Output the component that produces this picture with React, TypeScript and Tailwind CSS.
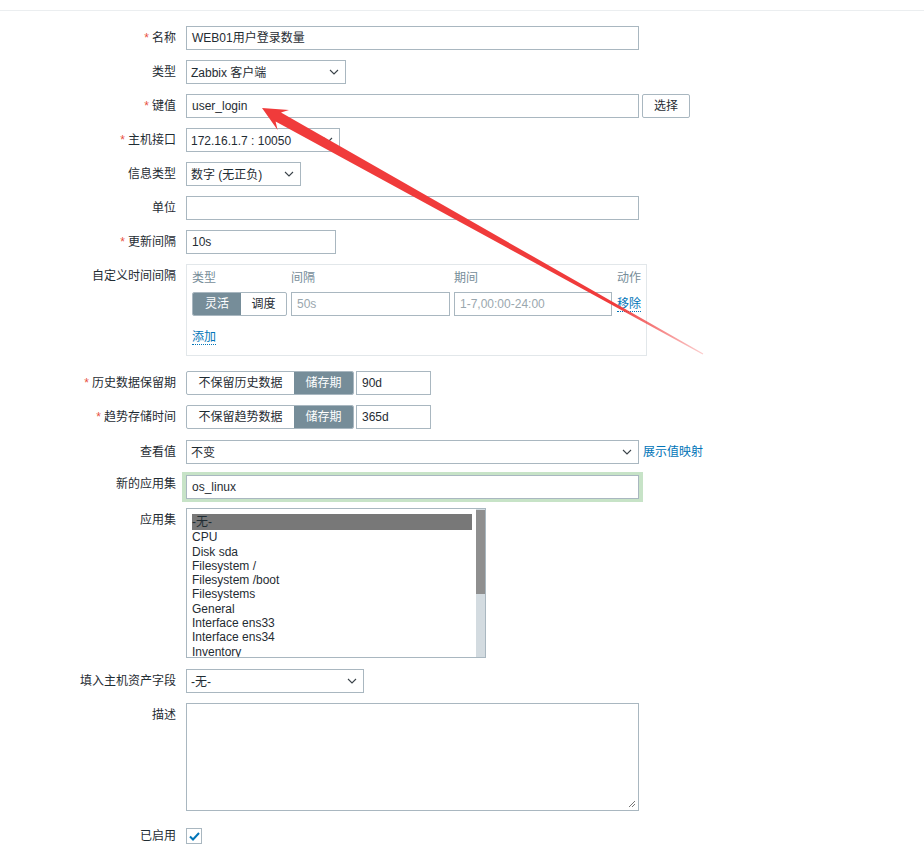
const FONT = "font-['Liberation_Sans','Noto_Sans_CJK_SC',sans-serif]"

const APPS = [
  "CPU",
  "Disk sda",
  "Filesystem /",
  "Filesystem /boot",
  "Filesystems",
  "General",
  "Interface ens33",
  "Interface ens34",
  "Inventory",
]

function Chevron() {
  return (
    <svg width="10" height="6" viewBox="0 0 10 6" className="shrink-0">
      <path d="M1 1 L5 5 L9 1" fill="none" stroke="#3a4349" strokeWidth="1.1" />
    </svg>
  )
}

function Row({
  label,
  required,
  className,
  children,
}: {
  label: string
  required?: boolean
  className?: string
  children: React.ReactNode
}) {
  return (
    <div className={"flex " + (className ?? "")}>
      <div className="w-[176px] shrink-0 text-right leading-[24px] whitespace-nowrap">
        {required && <span className="mr-[3px] text-[#e8513f]">*</span>}
        {label}
      </div>
      <div className="ml-[10px] flex items-start">{children}</div>
    </div>
  )
}

function TextBox({ w, value }: { w: string; value?: string }) {
  return (
    <div className={"h-[24px] border border-[#a9b7c0] bg-white px-[5px] leading-[23px] " + w}>
      {value}
    </div>
  )
}

function SelectBox({ w, value }: { w: string; value: string }) {
  return (
    <div
      className={
        "flex h-[24px] items-center justify-between border border-[#a9b7c0] bg-white pl-[4px] pr-[6px] " + w
      }
    >
      <span className="pt-[1px]">{value}</span>
      <Chevron />
    </div>
  )
}

function Arrow() {
  return (
    <svg
      className="pointer-events-none absolute left-0 top-0"
      width="924"
      height="845"
      viewBox="0 0 924 845"
    >
      <defs>
        <linearGradient id="arrowFade" gradientUnits="userSpaceOnUse" x1="262" y1="108" x2="703" y2="354">
          <stop offset="0" stopColor="#f03b3b" />
          <stop offset="0.8" stopColor="#f03b3b" />
          <stop offset="1" stopColor="#f03b3b" stopOpacity="0.25" />
        </linearGradient>
      </defs>
      <polygon
        points="262,108 289,110 281,112.6 703.3,353.6 702.7,354.4 275.6,121.4 277.6,130"
        fill="url(#arrowFade)"
      />
    </svg>
  )
}

export default function App() {
  return (
    <div className={"relative h-[845px] w-[924px] overflow-hidden bg-white text-[12px] text-[#1f2c33] " + FONT}>
      <div className="h-[11px] border-b border-[#ebeef0]" />

      <Row label="名称" required className="mt-[15px]">
        <TextBox w="w-[453px]" value="WEB01用户登录数量" />
      </Row>

      <Row label="类型" className="mt-[10px]">
        <SelectBox w="w-[160px]" value="Zabbix 客户端" />
      </Row>

      <Row label="键值" required className="mt-[10px]">
        <TextBox w="w-[453px]" value="user_login" />
        <div className="ml-[3px] h-[24px] w-[48px] rounded-[2px] border border-[#a9b7c0] bg-white text-center leading-[22px]">
          选择
        </div>
      </Row>

      <Row label="主机接口" required className="mt-[10px]">
        <SelectBox w="w-[154px]" value="172.16.1.7 : 10050" />
      </Row>

      <Row label="信息类型" className="mt-[10px]">
        <SelectBox w="w-[115px]" value="数字 (无正负)" />
      </Row>

      <Row label="单位" className="mt-[10px]">
        <TextBox w="w-[453px]" />
      </Row>

      <Row label="更新间隔" required className="mt-[10px]">
        <TextBox w="w-[150px]" value="10s" />
      </Row>

      <Row label="自定义时间间隔" className="mt-[10px]">
        <div className="h-[92px] w-[461px] border border-[#e2e7ea] px-[5px] pt-[1px]">
          <div className="flex h-[24px] leading-[24px] text-[#768d99]">
            <span className="w-[99px]">类型</span>
            <span className="w-[163px]">间隔</span>
            <span className="w-[163px]">期间</span>
            <span>动作</span>
          </div>
          <div className="mt-[2px] flex h-[24px]">
            <div className="flex w-[95px] overflow-hidden rounded-[2px] border border-[#a9b7c0]">
              <span className="w-[48px] bg-[#768d99] text-center leading-[22px] text-white">灵活</span>
              <span className="flex-1 text-center leading-[22px]">调度</span>
            </div>
            <div className="ml-[4px] h-[24px] w-[159px] border border-[#a9b7c0] px-[5px] leading-[23px] text-[#9aa7ae]">
              50s
            </div>
            <div className="ml-[4px] h-[24px] w-[158px] border border-[#a9b7c0] px-[5px] leading-[23px] text-[#9aa7ae]">
              1-7,00:00-24:00
            </div>
            <span className="ml-[5px] self-center border-b border-dotted border-[#0275b8] leading-[14px] text-[#0275b8]">
              移除
            </span>
          </div>
          <div className="mt-[12px]">
            <span className="border-b border-dotted border-[#0275b8] leading-[14px] text-[#0275b8]">添加</span>
          </div>
        </div>
      </Row>

      <Row label="历史数据保留期" required className="mt-[15px]">
        <div className="flex h-[24px] w-[168px] overflow-hidden rounded-[2px] border border-[#a9b7c0]">
          <span className="w-[107px] text-center leading-[22px]">不保留历史数据</span>
          <span className="flex-1 bg-[#768d99] text-center leading-[22px] text-white">储存期</span>
        </div>
        <TextBox w="ml-[2px] w-[75px]" value="90d" />
      </Row>

      <Row label="趋势存储时间" required className="mt-[10px]">
        <div className="flex h-[24px] w-[168px] overflow-hidden rounded-[2px] border border-[#a9b7c0]">
          <span className="w-[107px] text-center leading-[22px]">不保留趋势数据</span>
          <span className="flex-1 bg-[#768d99] text-center leading-[22px] text-white">储存期</span>
        </div>
        <TextBox w="ml-[2px] w-[75px]" value="365d" />
      </Row>

      <Row label="查看值" className="mt-[11px]">
        <SelectBox w="w-[453px]" value="不变" />
        <span className="ml-[4px] leading-[24px] text-[#0275b8]">展示值映射</span>
      </Row>

      <Row label="新的应用集" className="mt-[8px]">
        <div className="-ml-[4px] bg-[#c7e3c7] px-[4px] py-[3px]">
          <TextBox w="w-[453px]" value="os_linux" />
        </div>
      </Row>

      <Row label="应用集" className="mt-[6px]">
        <div className="flex h-[150px] w-[300px] border border-[#a9b7c0] bg-white">
          <div className="flex-1 overflow-hidden pl-[5px] pr-[4px] pt-[5px] leading-[14.3px]">
            <div className="bg-[#787878] pb-[1px] pt-[1px]">-无-</div>
            {APPS.map((a) => (
              <div key={a}>{a}</div>
            ))}
          </div>
          <div className="w-[9px] bg-[#d3dbe0]">
            <div className="mt-[1px] h-[84px] bg-[#8f8f8f]" />
          </div>
        </div>
      </Row>

      <Row label="填入主机资产字段" className="mt-[11px]">
        <SelectBox w="w-[178px]" value="-无-" />
      </Row>

      <Row label="描述" className="mt-[10px]">
        <div className="relative h-[108px] w-[453px] border border-[#a9b7c0] bg-white">
          <svg className="absolute bottom-[2px] right-[2px]" width="8" height="8" viewBox="0 0 8 8">
            <path d="M1 7 L7 1 M4 7 L7 4" stroke="#666" strokeWidth="0.9" />
          </svg>
        </div>
      </Row>

      <Row label="已启用" className="mt-[13px]">
        <div className="mt-[4px] flex h-[16px] w-[16px] items-center justify-center border border-[#a9b7c0] bg-white">
          <svg width="11" height="9" viewBox="0 0 11 9">
            <path d="M1 4.5 L4 7.5 L10 1" fill="none" stroke="#0275b8" strokeWidth="2" />
          </svg>
        </div>
      </Row>

      <Arrow />
    </div>
  )
}
